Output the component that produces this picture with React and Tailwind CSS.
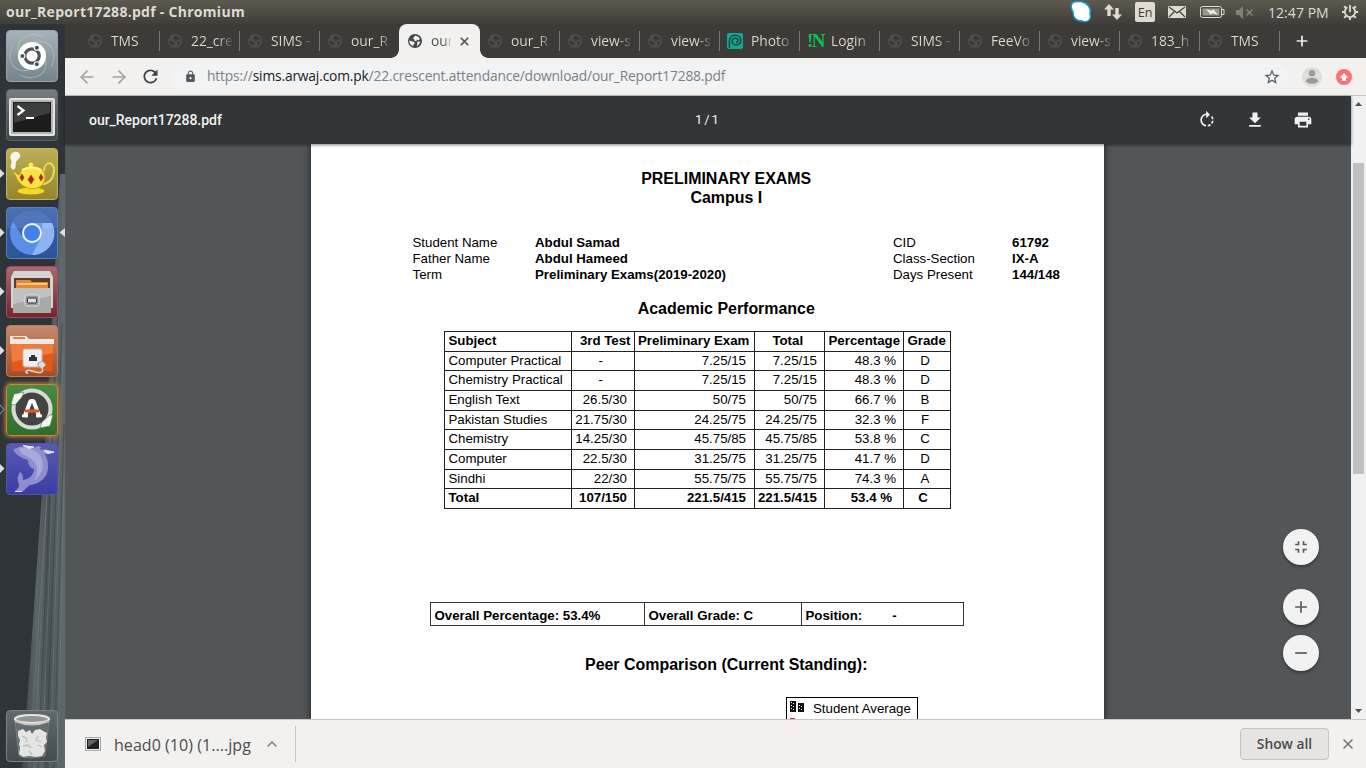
import React from "react";
import { MdFileDownload, MdPrint, MdRotateRight, MdFullscreenExit, MdAdd, MdRemove, MdRefresh, MdLock, MdStarBorder } from "react-icons/md";
import { ChevronUp, X, Plus, ArrowLeft, ArrowRight } from "lucide-react";

const tabs = [
  ["TMS"], ["22_cre"], ["SIMS -"], ["our_R"], ["our", "active"], ["our_R"], ["view-s"], ["view-s"],
  ["Photo", "photo"], ["Login", "login"], ["SIMS -"], ["FeeVo"], ["view-s"], ["183_h"], ["TMS"],
];

function Globe({ dark }) {
  return (
    <svg width="14" height="14" viewBox="0 0 14 14" className="shrink-0">
      <circle cx="7" cy="7" r="7" fill={dark ? "#45474a" : "#4e4d4b"} />
      <path d="M1.4 6.6 4.6 7.4 6.7 8.2 6.4 10 5.2 10.6 5.5 12.3 3 11 1.4 8.6Z M7.4 1.6 10.6 2.9 12 5 10.4 6.3 8.8 5.8 8.4 7.2 6.1 6.6 6.3 5.2 4.9 4.3Z M9.3 7.6 12.3 7.8 11 10.6 8.7 12.2 9.3 10Z" fill={dark ? "#f2f1f0" : "#3b3936"} />
    </svg>
  );
}

function TabIcon({ kind }) {
  if (kind === "photo")
    return (
      <svg width="16" height="16" viewBox="0 0 16 16" className="-ml-px shrink-0">
        <rect width="16" height="16" rx="2" fill="#0cab98" />
        <path d="M2.4 15V8.2C2.4 4.5 5 2.2 8.3 2.2c3.2 0 5.5 2 5.5 5 0 2.8-2 4.7-4.8 4.7-2.3 0-3.9-1.4-3.9-3.5 0-1.9 1.4-3.2 3.2-3.2 1.6 0 2.7 1 2.7 2.3 0 1.1-.8 1.9-1.9 1.9" stroke="#24443f" strokeWidth="1.5" fill="none" />
      </svg>
    );
  if (kind === "login")
    return <span className="-ml-px w-[16px] shrink-0 font-['Liberation_Serif',serif] text-[19px] leading-4 font-bold tracking-[-1.5px] text-[#08c151]">!N</span>;
  return <Globe dark={kind === "active"} />;
}

function Tab({ label, kind, beforeActive }) {
  const active = kind === "active";
  if (active)
    return (
      <div className="relative -ml-px flex h-[34px] w-[81px] items-center rounded-t-lg bg-[#f2f1f0] pl-[9px]">
        <span className="absolute bottom-0 -left-2 size-2 bg-[radial-gradient(circle_at_0_0,transparent_7.5px,#f2f1f0_8px)]" />
        <span className="absolute -right-2 bottom-0 size-2 bg-[radial-gradient(circle_at_100%_0,transparent_7.5px,#f2f1f0_8px)]" />
        <Globe dark />
        <span className="ml-[9px] w-[21px] overflow-hidden bg-gradient-to-r from-[#4a4a4a] from-60% to-transparent bg-clip-text text-transparent">{label}</span>
        <X size={13} strokeWidth={3.2} className="ml-[6px] shrink-0 text-[#555]" />
      </div>
    );
  return (
    <div className="flex h-[34px] w-20 items-center pl-[8px]">
      <TabIcon kind={kind} />
      <span className={"w-[41px] overflow-hidden bg-gradient-to-r from-[#dfdbd2] from-65% to-[#dfdbd2]/10 bg-clip-text whitespace-nowrap text-transparent " + (kind ? "ml-2" : "ml-[9px]")}>{label}</span>
      {!beforeActive && <span className="ml-auto h-5 w-px bg-[#77756f]" />}
    </div>
  );
}

const tile = "relative flex size-[52px] shrink-0 items-center justify-center overflow-hidden rounded-[4px] border";

function Launcher() {
  return (
    <aside className="relative flex w-[65px] shrink-0 flex-col gap-[7px] bg-[#2e3437] pt-[6px] pl-[6px]">
      <svg width="65" height="744" viewBox="0 0 65 744" className="pointer-events-none absolute top-0 left-0">
        <defs>
          <linearGradient id="wall" x1="0" x2="1" y1="0" y2="0">
            <stop offset="0" stopColor="#41484b" /><stop offset=".35" stopColor="#5b6467" /><stop offset=".6" stopColor="#4a5255" /><stop offset="1" stopColor="#616a6d" />
          </linearGradient>
        </defs>
        <path d="M60 150H65V744H22L30 640 44 440Z" fill="url(#wall)" />
        <path d="M57 250 34 744M61 230 42 744M63 330 50 744M64 450 58 744M53 380 29 744" stroke="#788083" strokeWidth=".8" opacity=".6" fill="none" />
        <path d="M59 260 38 744M62 300 46 744M64 400 54 744" stroke="#33393c" strokeWidth=".8" opacity=".6" fill="none" />
      </svg>
      <div className={tile + " border-[#9aa5aa] bg-gradient-to-b from-[#a6b2b8] to-[#75838a]"}>
        <svg width="50" height="50" viewBox="0 0 50 50">
          <path d="M13 25C5 10 22-2 36 6M25 12C42 5 53 22 44 36M37 25c8 16-9 27-24 19M25 38C8 45-3 29 6 14" stroke="#c3ccd0" strokeWidth="1.2" fill="none" opacity=".5" />
          <circle cx="25" cy="25" r="14" fill="#fff" />
          <circle cx="25" cy="25" r="7.2" fill="none" stroke="#4c5356" strokeWidth="3.2" />
          <g fill="#4c5356" stroke="#fff" strokeWidth="1.1"><circle cx="15.400" cy="25" r="2.600" /><circle cx="29.800" cy="16.700" r="2.600" /><circle cx="29.800" cy="33.300" r="2.600" /></g>
        </svg>
      </div>
      <div className={tile + " border-[#5d6467] bg-gradient-to-b from-[#777d80] to-[#3f4649]"}>
        <svg width="50" height="50" viewBox="0 0 50 50">
          <rect x="2" y="8" width="46" height="38" rx="2" fill="#e3e3e3" /><rect x="4" y="10" width="42" height="34" fill="#b4b4b4" />
          <rect x="6" y="12" width="38" height="30" fill="#1c1c1c" /><path d="M7 13h36v10L7 33Z" fill="#3c3e3e" />
          <path d="m10.500 16 6 4.500-6 4.500M19 28h8" stroke="#fff" strokeWidth="2.200" fill="none" />
        </svg>
      </div>
      <div className={tile + " border-[#c2b45d] bg-gradient-to-b from-[#bdae58] to-[#95852f]"}>
        <svg width="50" height="50" viewBox="0 0 50 50">
          <ellipse cx="24" cy="42" rx="14" ry="4" fill="#f3d92f" stroke="#b18b00" />
          <path d="M37 22c0-10 10-10 10-1 0 9-6 15-14 14" fill="none" stroke="#f0dc42" strokeWidth="2" />
          <path d="M5 22c4 1 5 4 8 4 0-12 24-13 25 1 1 14-17 17-26 6-3-4-3-7-7-11Z" fill="#fae243" stroke="#c6a411" />
          <circle cx="24" cy="16" r="3" fill="#fce95e" stroke="#c6a411" /><path d="M15 21q9-5 19 0" stroke="#fff6aa" strokeWidth="2" fill="none" />
          <path d="m15 25 2 3.500-2 3.500-2-3.500Zm9 1 3 4.500-3 4.500-3-4.500Zm10-1 2 3.500-2 3.500-2-3.500Z" fill="#c11a24" stroke="#8d3218" strokeWidth=".5" />
          <path d="M6 21c-5-4 0-6-2-10-3-7 5-10 8-7 4 4-2 6-3 9-1 4 1 6-3 8Z" fill="#f8f6ea" />
        </svg>
      </div>
      <div className={tile + " border-[#5a7fbd] bg-gradient-to-b from-[#355fa8] to-[#2c5499]"}>
        <svg width="50" height="50" viewBox="0 0 50 50">
          <circle cx="25" cy="25" r="22" fill="#5a8fe8" /><path d="M6 14A22 22 0 0 1 45 15H25L15 28Z" fill="#3a68b7" />
          <path d="M45 15A22 22 0 0 1 25 47l10-19V15Z" fill="#8db3f2" /><path d="M0 0h50v20H0Z" fill="#fff" opacity=".1" />
          <circle cx="25" cy="25" r="9" fill="#4381e8" stroke="#f2f6ff" strokeWidth="2" />
        </svg>
      </div>
      <div className={tile + " border-[#9b5059] bg-gradient-to-b from-[#aa6971] to-[#73242f]"}>
        <svg width="50" height="50" viewBox="0 0 50 50">
          <path d="M7 4h36l3 6v31H4V10Z" fill="#d4d4d2" /><path d="M7 11h36v11H7Z" fill="#5e3a29" /><path d="M9 13h14l2 2h16v7H9Z" fill="#e78834" /><path d="M10 16h30v2H10Z" fill="#ffc777" />
          <path d="M6 21h38v25H6Z" fill="#aaa9a7" /><path d="M6 21h38v8L6 37Z" fill="#c2c1bf" />
          <rect x="18" y="28" width="14" height="11" rx="2" fill="#999" stroke="#e0e0e0" /><rect x="20.500" y="31" width="9" height="5" rx="1" fill="#ddd" stroke="#333" />
        </svg>
      </div>
      <div className={tile + " border-[#c37c5b] bg-gradient-to-b from-[#c48a70] to-[#a14e26]"}>
        <svg width="50" height="50" viewBox="0 0 50 50">
          <path d="M3 10h16l3 3h25v9H3Z" fill="#eee9e3" /><path d="M6 12h12" stroke="#ec7b46" strokeWidth="2" /><path d="M3 18h44l-2 27H5Z" fill="#e2591a" /><path d="M4 18h42v9L5 36Z" fill="#f17a3d" />
          <rect x="16" y="23" width="19" height="18" rx="2" fill="#eee" stroke="#bdb7af" /><path d="M22 35v-4h2v-2h4v2h2v4Z" fill="#333" />
          <path d="m31 37 5-2 3 4-4 4-4-3Z" fill="#ddd" stroke="#888" strokeWidth=".7" /><path d="M35 42c3 6-4 5-10 3s-8 2-4 2" stroke="#ddd" strokeWidth="1.500" fill="none" />
        </svg>
      </div>
      <div className={tile + " border-[#c98440] bg-gradient-to-b from-[#4a8b42] to-[#2c6e2b] shadow-[0_0_4px_1px_#c47736]"}>
        <svg width="50" height="50" viewBox="0 0 50 50">
          <circle cx="25" cy="24" r="18.500" fill="#434343" stroke="#d9d9d8" strokeWidth="4" />
          <path d="M4 19 7 9l10-2-2 5-7 8Z M46 30l-3 11-10 2 2-6 8-7Z" fill="#f6f6f5" stroke="#367d31" strokeWidth=".6" />
          <path d="m17.500 32 6-16h3l6 16" stroke="#fff" strokeWidth="4" strokeLinejoin="bevel" fill="none" /><path d="M18 26h14" stroke="#e95420" strokeWidth="3" /><path d="M15 31h6m8 0h6" stroke="#fff" strokeWidth="2.500" />
        </svg>
      </div>
      <div className={tile + " border-[#5151ae] bg-gradient-to-b from-[#5a5ab4] to-[#3c3ba4]"}>
        <svg width="50" height="50" viewBox="0 0 50 50">
          <path d="M6 6C11 2 20 1 27 4c3-2 5-2 7-1l-1 3c6-1 10 0 14 2-3 2-6 2-9 2 7 15 2 28-14 31-4 1-6 5-9 7l-7-1c4-3 5-6 3-9-1-4 0-7 2-10 3 2 3 5 3 8 6-1 11-5 11-11-4-1-6-4-6-9-6-2-11-4-15-10Z" fill="#8e8ece" />
          <path d="M12 4c11-1 19 3 22 9 4 9 1 18-7 24 5-9 4-17-3-22-5-4-11-4-12-11Z" fill="#a9a9dd" />
          <path d="M16 1.500 27 3l-5 1.500Zm21 5 10 1.500-6 1.500Z M8 47.500h7" stroke="#e3e3f6" strokeWidth="1" fill="#eee" />
        </svg>
      </div>
      <div className={tile + " mt-[208px] border-[#7d8487] bg-gradient-to-b from-[#62696c] to-[#444c50]"}>
        <svg width="50" height="50" viewBox="0 0 50 50">
          <path d="m8 10 4 35q13 4 26 0l4-35Z" fill="#656c6d" stroke="#8c9393" strokeWidth=".6" />
          <path d="m11 20 5-2 3 3 4-2 2 4 3-4 5-1 3 2 4 2-1 4 1 5-3 3 1 6-3 5-6 1-7-1-6 1-4-3 1-6-1-4 1-4-2-4Z" fill="#e4e5e2" />
          <path d="m15 25 4 2 1 4m11-6-2 4 5 2m-18 4 5-1 3 3m7-3 4 2m-13 4 3 4" stroke="#bcbebb" strokeWidth="1.300" fill="none" />
          <ellipse cx="25" cy="8" rx="17" ry="4" fill="#8f9492" stroke="#e3e4df" strokeWidth="2.200" /><path d="M8 10q17 7 34 0" stroke="#c5c6bf" strokeWidth="2" fill="none" />
        </svg>
      </div>
      <svg width="65" height="744" viewBox="0 24 65 744" className="pointer-events-none absolute top-0 left-0">
        <path d="M0 169v9l4.500-4.500ZM0 228v9l4.500-4.500ZM0 287v9l4.500-4.500ZM0 346v9l4.500-4.500ZM0 464v9l4.500-4.500ZM65 228v9l-5.500-4.500Z" fill="#dedede" />
        <path d="m0 405 4 4.500-4 4.500" stroke="#5fb4e5" fill="none" />
      </svg>
    </aside>
  );
}

function StatusIcons() {
  return (
    <svg width="190" height="24" viewBox="0 0 190 24">
      <path d="M4 2c4-1 7-1 11 1 5 3 6 7 5 11 2 6-3 9-8 7-6 0-9-4-9-9C0 7 1 3 4 2Z" fill="#fff" stroke="#1796cf" strokeWidth="1.500" />
      <g fill="#dfdbd2">
        <path d="m39 4 5 5.500h-3.300V16h-3.400V9.500H34ZM47 20l-5-5.500h3.300V8h3.400v6.500H52Z" />
        <rect x="65" y="2" width="20" height="20" rx="2" />
        <rect x="98" y="6" width="18" height="12" rx="1" />
      </g>
      <path d="m99 7 8 6 8-6M99 17l5.500-5.500M115 17l-5.500-5.500" stroke="#45433e" strokeWidth="1.200" fill="none" />
      <rect x="130.500" y="6.500" width="21" height="11" rx="2" fill="none" stroke="#dfdbd2" /><path d="M152 9.500h2v5h-2" stroke="#dfdbd2" fill="none" />
      <rect x="132.500" y="8.500" width="17" height="7" fill="#99968e" /><path d="m136 9 6 2 1-2 5 6-6-2-1 2Z" fill="#efede7" />
      <path d="M166 10h3l4-4v13l-4-4h-3Z" fill="#83817b" /><path d="m176.500 9.500 6 6m0-6-6 6" stroke="#83817b" strokeWidth="1.700" />
      <text x="75" y="17" textAnchor="middle" fontFamily="Open Sans" fontSize="12.500" fontWeight="500" fill="#3c3b37">En</text>
    </svg>
  );
}

const rows = [
  ["Computer Practical", "-", "7.25/15", "7.25/15", "48.3 %", "D", "h-[19px]"],
  ["Chemistry Practical", "-", "7.25/15", "7.25/15", "48.3 %", "D", "h-[20px]"],
  ["English Text", "26.5/30", "50/75", "50/75", "66.7 %", "B", "h-[20px]"],
  ["Pakistan Studies", "21.75/30", "24.25/75", "24.25/75", "32.3 %", "F", "h-[19px]"],
  ["Chemistry", "14.25/30", "45.75/85", "45.75/85", "53.8 %", "C", "h-[20px]"],
  ["Computer", "22.5/30", "31.25/75", "31.25/75", "41.7 %", "D", "h-[20px]"],
  ["Sindhi", "22/30", "55.75/75", "55.75/75", "74.3 %", "A", "h-[19px]"],
  ["Total", "107/150", "221.5/415", "221.5/415", "53.4 %", "C", "h-[20px]"],
];
const line = "grid grid-cols-[126.500px_63.500px_119.500px_70.500px_79px_47px] leading-4 whitespace-nowrap ";
const cell = "border-r border-b border-[#222] pt-px ";

function Report() {
  return (
    <article className="flex h-[575px] w-[793px] flex-col overflow-hidden bg-white pt-[25px] font-['Liberation_Sans',sans-serif] text-[13.28px] leading-4 text-black shadow-[0_0_6px_1px_#252729]">
      <h1 className="pl-[37.5px] text-center text-[15.94px] leading-[19px] font-bold">PRELIMINARY EXAMS<br />Campus I</h1>
      <div className="mt-[28px] grid shrink-0 grid-cols-[122.5px_358px_119px_1fr] pl-[101.5px]">
        <span>Student Name</span><b>Abdul Samad</b><span>CID</span><b>61792</b>
        <span>Father Name</span><b>Abdul Hameed</b><span>Class-Section</span><b>IX-A</b>
        <span>Term</span><b>Preliminary Exams(2019-2020)</b><span>Days Present</span><b>144/148</b>
      </div>
      <h2 className="mt-[16px] pl-[37.5px] text-center text-[15.94px] leading-[19px] font-bold">Academic Performance</h2>
      <div className="mt-[13px] ml-[133px] w-[507px] shrink-0 border-t border-l border-[#222]">
        <div className={line + "h-[20px] font-bold"}>
          <div className={cell + "pl-[3.5px]"}>Subject</div>
          <div className={cell + "pr-[3.5px] text-right"}>3rd Test</div>
          <div className={cell + "pl-[3px]"}>Preliminary Exam</div>
          <div className={cell + "pr-[3px] text-center"}>Total</div>
          <div className={cell + "pl-[3.5px]"}>Percentage</div>
          <div className={cell + "pl-[3.5px]"}>Grade</div>
        </div>
        {rows.map((r, i) => {
          const last = i === 7;
          return (
            <div key={r[0]} className={line + r[6] + (last ? " font-bold" : "")}>
              <div className={cell + "pl-[3.5px]"}>{r[0]}</div>
              <div className={cell + (r[1] === "-" ? "pr-[4px] text-center" : "pr-[7px] text-right")}>{r[1]}</div>
              <div className={cell + "pr-[7.5px] text-right"}>{r[2]}</div>
              <div className={cell + "pr-[7px] text-right"}>{r[3]}</div>
              <div className={cell + (last ? "pr-[11px] text-right" : "pr-[7px] text-right")}>{r[4]}</div>
              <div className={cell + (last ? "pr-[8px] text-center" : "pr-[4px] text-center")}>{r[5]}</div>
            </div>
          );
        })}
      </div>
      <div className="mt-[93px] ml-[119px] grid h-[24px] w-[534px] shrink-0 grid-cols-[214px_157px_1fr] border border-[#333] pt-0 font-bold">
        <div className="border-r border-[#333] pt-[5px] pl-[3.5px]">Overall Percentage: 53.4%</div>
        <div className="border-r border-[#333] pt-[5px] pl-[3.5px]">Overall Grade: C</div>
        <div className="flex gap-[30px] pt-[5px] pl-[3.5px]"><span>Position:</span><span>-</span></div>
      </div>
      <h2 className="mt-[29px] pl-[37.5px] text-center text-[15.94px] leading-[19px] font-bold">Peer Comparison (Current Standing):</h2>
      <div className="mt-[23px] ml-[475px] flex h-[40px] w-[132px] shrink-0 border border-black pt-[3px] pl-[3px]">
        <svg width="16" height="24" viewBox="0 0 16 24">
          <path d="M0 0h6v11H0ZM8 2h6v9H8Z" fill="#111" />
          <path d="M1 1.500h1m1 1h1m-3 2h1m1 1h1m-3 2h1m1 1h1M9 4.500h1m1 1h1m-3 2h1m1 1h1" stroke="#fff" />
          <path d="M0 17h5v5H0Z" fill="#d32b2b" />
        </svg>
        <span className="ml-[7px]">Student Average</span>
      </div>
    </article>
  );
}

const fab = "flex size-9 items-center justify-center rounded-full bg-[#f2f2f2] text-[#5a5a5a] shadow-[0_2px_3px_rgba(0,0,0,.35)]";

export default function App() {
  return (
    <div className="flex h-[768px] w-[1366px] flex-col overflow-hidden font-['Open_Sans',sans-serif]">
      <header className="flex h-6 shrink-0 items-center bg-gradient-to-b from-[#5d5a50] to-[#3f3e39] pl-[6px] text-[#dfdbd2]">
        <span className="text-[14px] leading-6 font-bold tracking-[0.28px]">our_Report17288.pdf - Chromium</span>
        <span className="ml-auto flex items-center">
          <StatusIcons />
          <span className="ml-[8px] w-[63px] text-[14px] tracking-[0.05px] whitespace-nowrap">12:47 PM</span>
          <svg width="16" height="16" viewBox="0 0 16 16" className="mr-[8px] ml-[11px]">
            <path d="M5.500 3.300a5.200 5.200 0 1 0 5 0M8 1v7" fill="none" stroke="#dfdbd2" strokeWidth="1.800" />
            <path d="M2.500 8H0m16 0h-2.500M4 12l-1.800 1.800M12 12l1.800 1.800M8 13.500V16M4 4 2.200 2.200M12 4l1.800-1.800" stroke="#dfdbd2" strokeWidth="2" />
          </svg>
        </span>
      </header>
      <div className="flex min-h-0 flex-1">
        <Launcher />
        <main className="flex min-w-0 flex-1 flex-col">
          <nav className="flex h-[34px] shrink-0 items-center bg-[#3d3b37] pl-[15px] text-[13.8px]">
            {tabs.map(([label, kind], i) => <Tab key={i} label={label} kind={kind} beforeActive={i === 3} />)}
            <Plus size={16} strokeWidth={2.600} className="ml-[14px] text-[#efede7]" />
          </nav>
          <div className="flex h-[38px] shrink-0 items-center border-b border-[#c9c7c5] bg-[#f2f1f0] pl-[12px]">
            <ArrowLeft size={20} strokeWidth={2} className="text-[#a3a2a1]" />
            <ArrowRight size={20} strokeWidth={2} className="ml-[12px] text-[#a3a2a1]" />
            <MdRefresh size={21} className="ml-[11px] text-[#3f4144]" />
            <div className="ml-[11px] flex h-7 w-[1117px] items-center rounded-full bg-[#f1f3f4] pl-[12px] text-[13.8px] text-[#7c8186]">
              <MdLock size={13} className="text-[#55595d]" />
              <span className="ml-[10px] tracking-[-0.17px] whitespace-nowrap">https://<span className="text-[#202124]">sims.arwaj.com.pk</span>/22.crescent.attendance/download/our_Report17288.pdf</span>
              <MdStarBorder size={18} className="mr-[8px] ml-auto text-[#55595d]" />
            </div>
            <svg width="20" height="20" viewBox="0 0 20 20" className="ml-[13px]"><circle cx="10" cy="10" r="10" fill="#dededd" /><circle cx="10" cy="6.300" r="3.200" fill="#9b9b9b" /><ellipse cx="10" cy="13.800" rx="6" ry="3" fill="#9b9b9b" /></svg>
            <svg width="16" height="16" viewBox="0 0 16 16" className="ml-[14px]"><circle cx="8" cy="8" r="8" fill="#ff6f73" /><path d="m8 4 4 4.500h-2V12H6V8.500H4Z" fill="#fff" /></svg>
          </div>
          <div className="flex min-h-0 flex-1">
            <section className="flex w-[1286px] flex-col bg-[#525659]">
              <div className="relative z-10 flex h-12 shrink-0 items-center bg-[#323639] pl-6 font-[Roboto,sans-serif] text-[#f1f1f1] shadow-[0_1px_3px_rgba(0,0,0,.5)]">
                <span className="w-[606px] pt-px text-[14px] font-medium tracking-[-0.03px]">our_Report17288.pdf</span>
                <span className="text-[13px] tracking-[0.35px] [word-spacing:-2px]">1 / 1</span>
                <span className="mr-[38px] ml-auto flex gap-7"><MdRotateRight size={20} /><MdFileDownload size={20} /><MdPrint size={20} /></span>
              </div>
              <div className="relative flex min-h-0 flex-1 overflow-hidden pl-[246px]">
                <Report />
                <div className="absolute top-[385px] right-8 flex flex-col">
                  <span className={fab}><MdFullscreenExit size={20} /></span>
                  <span className={fab + " mt-6"}><MdAdd size={20} /></span>
                  <span className={fab + " mt-[10px]"}><MdRemove size={20} /></span>
                </div>
              </div>
            </section>
            <div className="flex w-[15px] flex-col items-center bg-[#f1f1f1]">
              <svg width="7" height="4" className="mt-[6px]"><path d="M0 4 3.500 0 7 4Z" fill="#505050" /></svg>
              <span className="mt-[57px] h-[311px] w-[11px] bg-[#c1c1c1]" />
              <svg width="7" height="4" className="mt-auto mb-[6px]"><path d="m0 0 3.500 4L7 0Z" fill="#505050" /></svg>
            </div>
          </div>
          <footer className="flex h-[49px] shrink-0 items-center border-t border-[#c9c7c5] bg-[#f2f1f0] pl-5 text-[#4c4c4c]">
            <svg width="16" height="14" viewBox="0 0 16 14" className="-mt-px"><rect x=".5" y=".5" width="15" height="13" fill="#eee" stroke="#aaa" /><rect x="2" y="2" width="12" height="10" fill="#222" /><path d="M3 3h10L3 10Z" fill="#666" /></svg>
            <span className="ml-[13px] w-[138px] pt-[2px] text-[16px] tracking-[0.05px] whitespace-nowrap">head0 (10) (1....jpg</span>
            <ChevronUp size={16} className="ml-[12px] text-[#777]" />
            <span className="ml-[15px] h-9 w-px bg-[#c9c7c5]" />
            <button className="mr-[11px] ml-auto h-8 w-[89px] rounded-[4px] border border-[#c6c4c2] bg-[#e6e4e2] text-[13.8px] font-semibold">Show all</button>
            <X size={16} strokeWidth={2.500} className="mr-[10px] text-[#777]" />
          </footer>
        </main>
      </div>
    </div>
  );
}
